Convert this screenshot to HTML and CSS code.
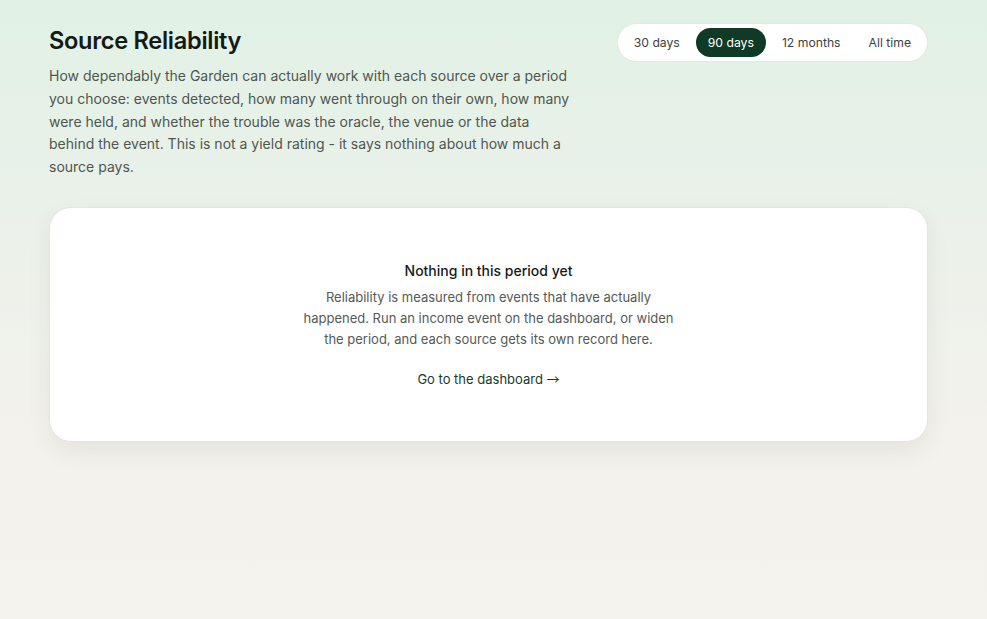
FILE: index.html
```html
<!DOCTYPE html>
<html lang="en">
<head>
<meta charset="utf-8">
<title>Source Reliability</title>
<link rel="stylesheet" href="styles.css">
</head>
<body>
<main class="page">
  <header class="head">
    <div class="intro">
      <h1 class="title">Source Reliability</h1>
      <p class="lede">How dependably the Garden can actually work with each source over a period you choose: events detected, how many went through on their own, how many were held, and whether the trouble was the oracle, the venue or the data behind the event. This is not a yield rating - it says nothing about how much a source pays.</p>
    </div>
    <nav class="seg">
      <button class="seg-btn">30 days</button>
      <button class="seg-btn active">90 days</button>
      <button class="seg-btn">12 months</button>
      <button class="seg-btn">All time</button>
    </nav>
  </header>
  <section class="card">
    <h2 class="empty-title">Nothing in this period yet</h2>
    <p class="empty-text">Reliability is measured from events that have actually happened. Run an income event on the dashboard, or widen the period, and each source gets its own record here.</p>
    <a class="empty-link" href="#">Go to the dashboard <span class="arrow">→</span></a>
  </section>
</main>
</body>
</html>
```
FILE: styles.css
```css
* { box-sizing: border-box; }
html, body { margin: 0; height: 100%; }
body {
  font-family: Inter, "Noto Sans", sans-serif;
  background: linear-gradient(180deg, #e1f1e6 0%, #ebf1ea 35%, #f3f2ec 70%, #f4f3ee 100%);
  color: #141a17;
}
.page {
  width: 879px;
  margin-left: 49px;
  padding-top: 25px;
}
.head {
  display: flex;
  justify-content: space-between;
  align-items: flex-start;
}
.intro { width: 524px; }
.title {
  margin: 0;
  font-size: 23.6px;
  font-weight: 600;
  letter-spacing: -0.3px;
  line-height: 32px;
  color: #141a17;
}
.lede {
  margin: 8px 0 0;
  font-size: 14px;
  line-height: 22.8px;
  color: #505650;
}
.seg {
  display: flex;
  gap: 4px;
  padding: 4px;
  margin-top: -2px;
  background: #fff;
  border: 1px solid #e3e8e2;
  border-radius: 999px;
}
.seg-btn {
  font-family: inherit;
  font-size: 12.2px;
  color: #3c423e;
  background: transparent;
  border: 0;
  border-radius: 999px;
  height: 29px;
  padding: 0 12px;
  cursor: pointer;
}
.seg-btn.active {
  background: #0f3a25;
  color: #fff;
}
.card {
  margin-top: 28px;
  background: #fff;
  border: 1px solid #e4e6e0;
  border-radius: 22px;
  box-shadow: 0 10px 24px rgba(40, 50, 40, 0.07);
  padding: 53px 20px 52px;
  display: flex;
  flex-direction: column;
  align-items: center;
  text-align: center;
}
.empty-title {
  margin: 0;
  font-size: 14px;
  font-weight: 500;
  line-height: 20px;
  color: #161a18;
}
.empty-text {
  margin: 6px 0 0;
  width: 375px;
  font-size: 13px;
  line-height: 21px;
  color: #545a56;
}
.empty-link {
  margin-top: 19px;
  font-size: 13px;
  line-height: 20px;
  color: #173b29;
  text-decoration: none;
}
.arrow { font-family: "Noto Sans CJK SC", sans-serif; }
```
